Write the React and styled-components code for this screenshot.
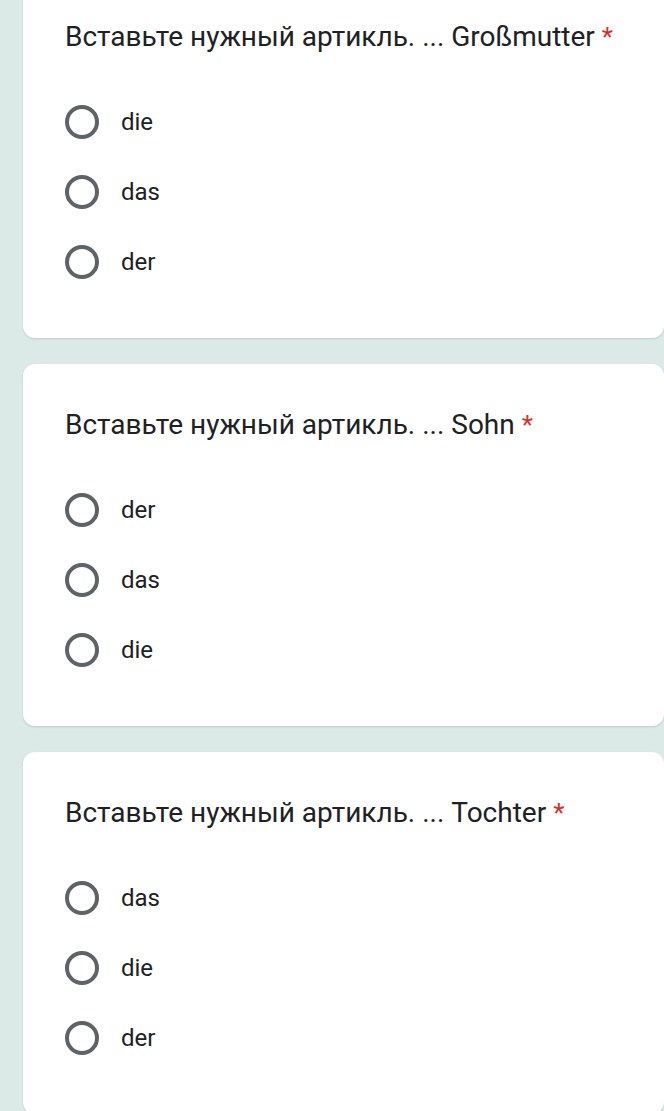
import React from "react";
import styled, { createGlobalStyle } from "styled-components";

const GlobalStyle = createGlobalStyle`
    html, body {
        margin: 0;
        padding: 0;
        background: #dbeae7;
        overflow: hidden;
    }
`;

const questions = [
    { title: "Вставьте нужный артикль. ... Großmutter", options: ["die", "das", "der"] },
    { title: "Вставьте нужный артикль. ... Sohn", options: ["der", "das", "die"] },
    { title: "Вставьте нужный артикль. ... Tochter", options: ["das", "die", "der"] },
];

function App() {
    return (
        <>
            <GlobalStyle />
            <Page>
                {questions.map((q) => (
                    <Card key={q.title}>
                        <Title>
                            {q.title} <Required>*</Required>
                        </Title>
                        <Options>
                            {q.options.map((opt) => (
                                <Option key={opt}>
                                    <Radio />
                                    <Label>{opt}</Label>
                                </Option>
                            ))}
                        </Options>
                    </Card>
                ))}
            </Page>
        </>
    );
}

const Page = styled.div`
    display: flex;
    flex-direction: column;
    gap: 26px;
    margin-top: -24px;
    padding-left: 23px;
`;

const Card = styled.div`
    background: #fff;
    border-radius: 12px;
    box-shadow: 0 1px 2px rgba(60, 64, 67, 0.18);
    padding: 43px 0 41px 42px;
`;

const Title = styled.div`
    font-family: Roboto, "Noto Sans", sans-serif;
    font-size: 28px;
    line-height: 36px;
    color: #202124;
`;

const Required = styled.span`
    color: #d93025;
    font-size: 26px;
`;

const Options = styled.div`
    display: flex;
    flex-direction: column;
    margin-top: 32px;
`;

const Option = styled.div`
    display: flex;
    align-items: center;
    height: 70px;
`;

const Radio = styled.span`
    width: 34px;
    height: 34px;
    box-sizing: border-box;
    border: 4px solid #5f6368;
    border-radius: 50%;
    flex-shrink: 0;
`;

const Label = styled.span`
    margin-left: 22px;
    font-family: Roboto, "Noto Sans", sans-serif;
    font-size: 24px;
    color: #202124;
`;

export default App;
